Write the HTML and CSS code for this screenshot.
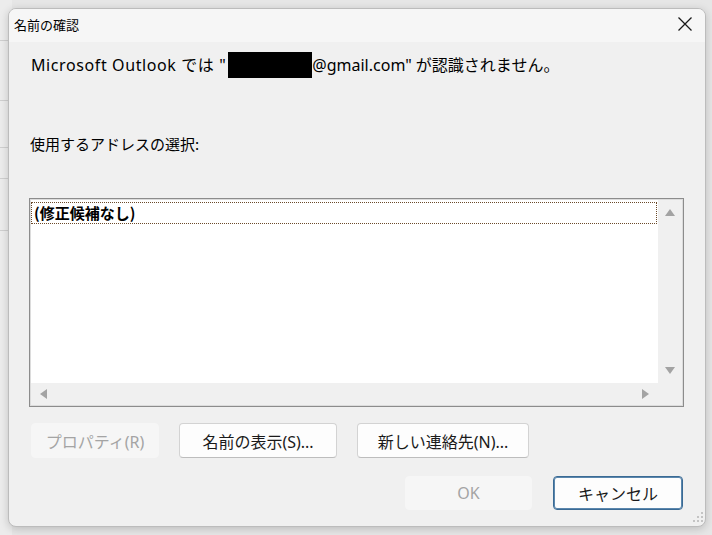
FILE: index.html
```html
<!DOCTYPE html>
<html lang="ja">
<head>
  <meta charset="UTF-8">
  <title>名前の確認</title>
  <link rel="stylesheet" href="styles.css">
</head>
<body>
  <div class="backdrop">
    <div class="strip"></div>
  </div>

  <div class="dialog">
    <div class="titlebar">
      <span class="title">名前の確認</span>
      <span class="close">
        <svg width="16" height="16" viewBox="0 0 16 16"><path d="M1.5 1.5 L14.5 14.5 M14.5 1.5 L1.5 14.5" stroke="#1a1a1a" stroke-width="1.3" fill="none"/></svg>
      </span>
    </div>

    <div class="content">
      <p class="message"><span class="lead">Microsoft Outlook では "</span><span class="redact"></span>@gmail.com" が認識されません。</p>
      <p class="prompt">使用するアドレスの選択:</p>

      <div class="listbox">
        <div class="items">
          <div class="item focused">(修正候補なし)</div>
        </div>
        <div class="vscroll">
          <span class="arrow up"></span>
          <span class="arrow down"></span>
        </div>
        <div class="hscroll">
          <span class="arrow left"></span>
          <span class="arrow right"></span>
        </div>
        <div class="corner"></div>
      </div>

      <div class="actions">
        <button class="btn w128" disabled>プロパティ(R)</button>
        <button class="btn w158">名前の表示(S)...</button>
        <button class="btn w172">新しい連絡先(N)...</button>
      </div>

      <div class="footer">
        <button class="btn w127" disabled>OK</button>
        <button class="btn w130 default">キャンセル</button>
      </div>
    </div>

    <div class="grip">
      <svg width="10" height="10" viewBox="0 0 10 10" fill="#c4c4c4">
        <rect x="8" y="0" width="2" height="2"/>
        <rect x="4" y="4" width="2" height="2"/><rect x="8" y="4" width="2" height="2"/>
        <rect x="0" y="8" width="2" height="2"/><rect x="4" y="8" width="2" height="2"/><rect x="8" y="8" width="2" height="2"/>
      </svg>
    </div>
  </div>
</body>
</html>
```

FILE: styles.css
```css
body {
  margin: 0;
  width: 712px;
  height: 535px;
  overflow: hidden;
  background: #e6e6e6;
  font-family: "Noto Sans", "Noto Sans CJK JP", sans-serif;
  color: #000;
  position: relative;
}
.backdrop {
  height: 535px;
}
.strip {
  width: 12px;
  height: 535px;
  background:
    linear-gradient(#cfcfcf, #cfcfcf) 0 40px / 12px 1px no-repeat,
    linear-gradient(#cfcfcf, #cfcfcf) 0 100px / 12px 1px no-repeat,
    linear-gradient(#cfcfcf, #cfcfcf) 0 147px / 12px 1px no-repeat,
    linear-gradient(#cfcfcf, #cfcfcf) 0 178px / 12px 1px no-repeat,
    linear-gradient(#cfcfcf, #cfcfcf) 0 230px / 12px 1px no-repeat,
    #ececec;
}
.dialog {
  position: absolute;
  left: 8px;
  top: 8px;
  width: 698px;
  height: 519px;
  box-sizing: border-box;
  border: 1px solid #bcbcbc;
  border-radius: 8px;
  background: #f0f0f0;
  box-shadow: 0 2px 8px rgba(0, 0, 0, 0.18);
  overflow: hidden;
}
.titlebar {
  height: 33px;
  display: flex;
  align-items: center;
  justify-content: space-between;
  padding: 0 12px 0 5px;
  background: #f6f6f6;
}
.title {
  font-family: "Noto Sans CJK JP", sans-serif;
  font-size: 13px;
  margin-top: -2px;
}
.close {
  display: flex;
  margin-top: -4px;
}
.content {
  padding: 0 22px 0 20px;
}
.message {
  margin: 10px 0 0 2px;
  font-size: 16px;
  line-height: 24px;
  height: 24px;
  white-space: nowrap;
}
.lead {
  letter-spacing: 0.6px;
}
.redact {
  display: inline-block;
  width: 84px;
  height: 26px;
  background: #000;
  vertical-align: -7px;
  margin-left: 2px;
}
.prompt {
  margin: 56px 0 0 1px;
  font-family: "Noto Sans CJK JP", sans-serif;
  font-size: 15px;
  line-height: 24px;
}
.listbox {
  margin-top: 42px;
  width: 655px;
  height: 209px;
  box-sizing: border-box;
  border: 1px solid #8c8c8c;
  box-shadow: inset 0 0 0 1px #dcdcdc;
  display: grid;
  grid-template-columns: 1fr 24px;
  grid-template-rows: 1fr 22px;
  padding: 1px;
  background: #f0f0f0;
}
.items {
  background: #fff;
  padding-top: 2px;
}
.item {
  height: 20px;
  line-height: 20px;
  padding-left: 2px;
  font-family: "Noto Sans CJK JP", sans-serif;
  font-weight: bold;
  font-size: 15px;
}
.item.focused {
  border: 1px dotted #6b4a2a;
  margin-right: 1px;
}
.vscroll {
  display: flex;
  flex-direction: column;
  justify-content: space-between;
  align-items: center;
  padding: 9px 0 9px;
}
.hscroll {
  display: flex;
  justify-content: space-between;
  align-items: center;
  padding: 0 9px 0 9px;
}
.arrow {
  width: 0;
  height: 0;
  border: 5px solid transparent;
}
.arrow.up {
  border-bottom: 7px solid #a3a3a3;
  border-top-width: 0;
}
.arrow.down {
  border-top: 7px solid #a3a3a3;
  border-bottom-width: 0;
}
.arrow.left {
  border-right: 7px solid #a3a3a3;
  border-left-width: 0;
}
.arrow.right {
  border-left: 7px solid #a3a3a3;
  border-right-width: 0;
}
.actions {
  display: flex;
  gap: 20px;
  margin: 16px 0 0 2px;
}
.footer {
  display: flex;
  justify-content: flex-end;
  gap: 21px;
  margin-top: 18px;
}
.btn {
  height: 35px;
  box-sizing: border-box;
  border: 1px solid #d3d3d3;
  border-bottom-color: #bdbdbd;
  border-radius: 4px;
  background: #fdfdfd;
  font-family: "Noto Sans", "Noto Sans CJK JP", sans-serif;
  font-size: 16px;
  color: #1a1a1a;
  padding: 0;
}
.btn:disabled {
  background: #f6f6f6;
  border-color: #f6f6f6;
  color: #a4a4a4;
}
.btn.default {
  border: 1px solid #3a6a94;
  box-shadow: inset 0 0 0 1px #5b87ad;
  height: 34px;
}
.footer .btn {
  height: 34px;
}
.w127 { width: 127px; }
.w128 { width: 128px; }
.w130 { width: 130px; }
.w158 { width: 158px; }
.w172 { width: 172px; }
.grip {
  position: absolute;
  right: 2px;
  bottom: 4px;
  display: flex;
}
```
